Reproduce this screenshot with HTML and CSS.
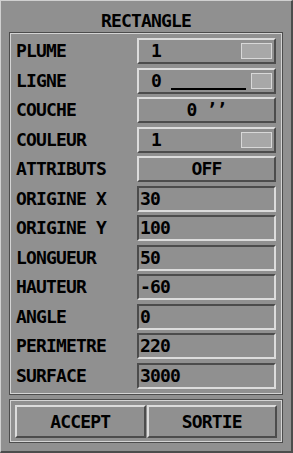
FILE: index.html
```html
<!DOCTYPE html>
<html>
<head>
<meta charset="utf-8">
<link rel="stylesheet" href="styles.css">
</head>
<body>
<div class="window">
  <div class="title">RECTANGLE</div>
  <div class="group form">
    <div class="label">PLUME</div>
    <div class="btn ind"><span class="val">1</span><span class="swatch"></span></div>
    <div class="label">LIGNE</div>
    <div class="btn ind"><span class="val">0</span><span class="stroke"></span><span class="swatch small"></span></div>
    <div class="label">COUCHE</div>
    <div class="btn center">0 ’’</div>
    <div class="label">COULEUR</div>
    <div class="btn ind"><span class="val">1</span><span class="swatch"></span></div>
    <div class="label">ATTRIBUTS</div>
    <div class="btn center">OFF</div>
    <div class="label">ORIGINE X</div>
    <div class="field">30</div>
    <div class="label">ORIGINE Y</div>
    <div class="field">100</div>
    <div class="label">LONGUEUR</div>
    <div class="field">50</div>
    <div class="label">HAUTEUR</div>
    <div class="field">-60</div>
    <div class="label">ANGLE</div>
    <div class="field">0</div>
    <div class="label">PERIMETRE</div>
    <div class="field">220</div>
    <div class="label">SURFACE</div>
    <div class="field">3000</div>
  </div>
  <div class="group actions">
    <div class="btn center big">ACCEPT</div>
    <div class="btn center big">SORTIE</div>
  </div>
</div>
</body>
</html>
```
FILE: styles.css
```css
* {
  box-sizing: border-box;
  margin: 0;
  padding: 0;
}

body {
  margin: 0;
  background: #909090;
  font-family: "DejaVu Sans Mono", monospace;
  font-weight: bold;
  font-size: 18px;
  letter-spacing: -0.84px;
  line-height: 18px;
  color: #000;
}

.window {
  width: 293px;
  height: 453px;
  background: #909090;
  border-top: 1px solid #d0d0d0;
  border-left: 1px solid #d0d0d0;
  border-right: 2px solid #4c4c4c;
  border-bottom: 2px solid #4c4c4c;
  padding: 0 8px;
  display: flex;
  flex-direction: column;
}

.title {
  height: 31px;
  padding-top: 11px;
  text-align: center;
  white-space: nowrap;
}

.group {
  border: 1px solid #4c4c4c;
  box-shadow: inset 0 0 0 1px #d4d4d4;
}

.form {
  display: grid;
  grid-template-columns: 121px 139px;
  grid-auto-rows: 26px;
  row-gap: 3.55px;
  padding: 5px 6px;
}

.label {
  display: flex;
  align-items: center;
  white-space: nowrap;
}

.btn {
  border: 2px solid;
  border-color: #dcdcdc #4c4c4c #4c4c4c #dcdcdc;
  display: flex;
  align-items: center;
  white-space: nowrap;
}

.field {
  border: 2px solid;
  border-color: #4c4c4c #dcdcdc #dcdcdc #4c4c4c;
  padding-left: 1px;
  display: flex;
  align-items: center;
  white-space: nowrap;
}

.center {
  justify-content: center;
}

.ind {
  padding: 0 2px 0 12px;
}

.swatch {
  margin-left: auto;
  width: 31px;
  height: 16px;
  background: #a8a8a8;
  border: 1px solid #d8d8d8;
}

.swatch.small {
  width: 21px;
  align-self: flex-start;
  margin-top: 3px;
}

.stroke {
  width: 75px;
  height: 2px;
  margin-left: 10px;
  background: #000;
  align-self: flex-end;
  margin-bottom: 2px;
}

.actions {
  margin-top: 4px;
  padding: 5px 5px 4px;
  display: flex;
  gap: 1px;
}

.big {
  flex: 1;
  height: 33px;
}
```
